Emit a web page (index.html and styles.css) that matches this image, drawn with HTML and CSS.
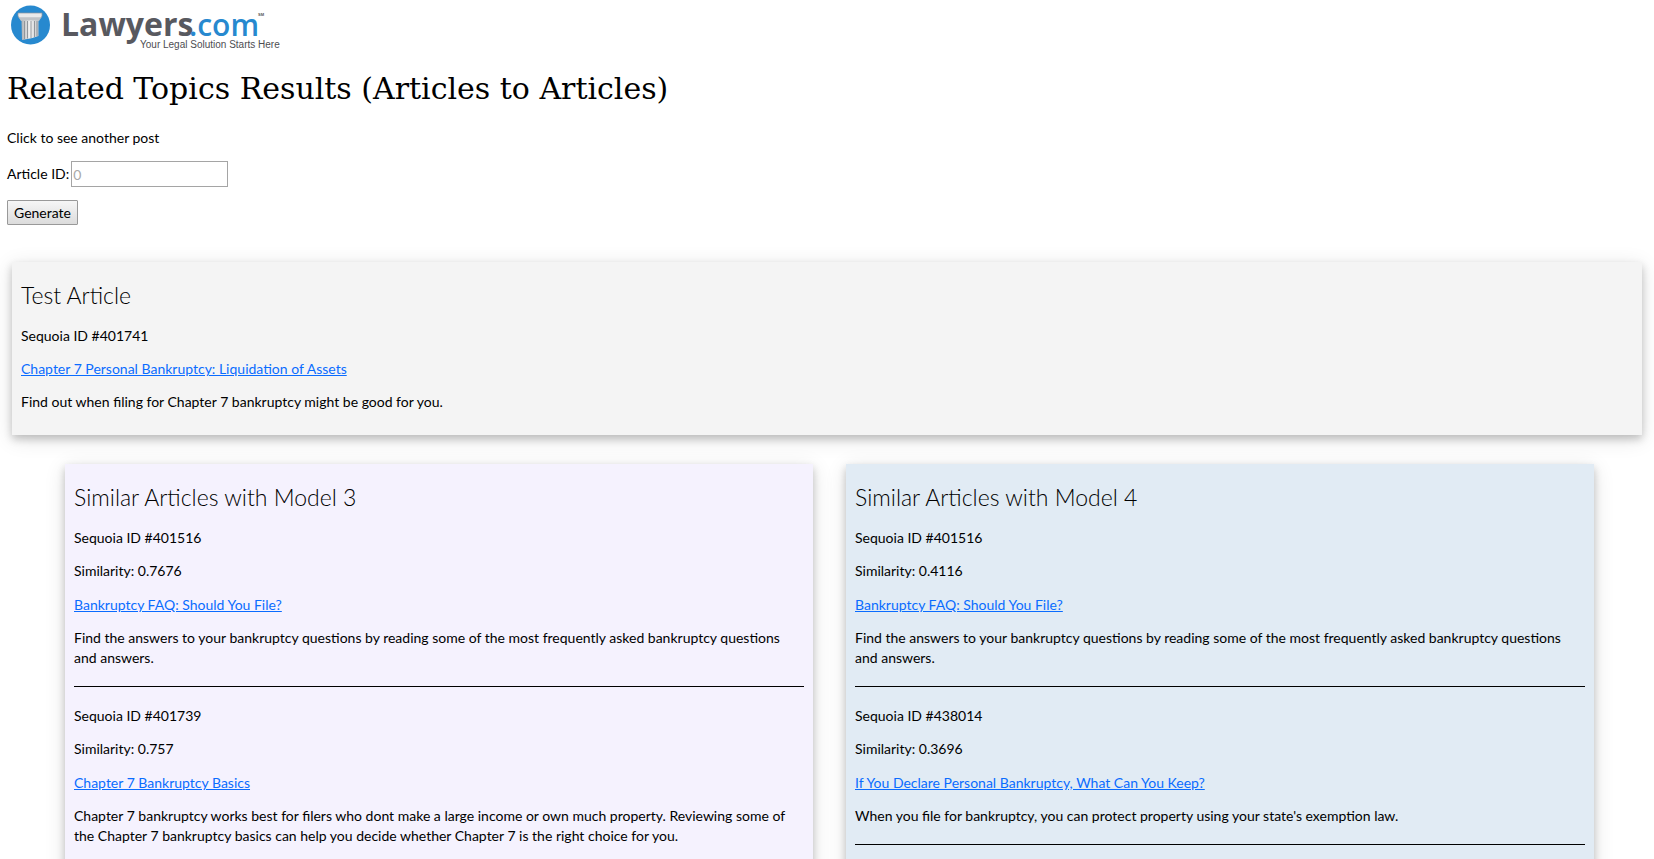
FILE: index.html
```html
<!DOCTYPE html>
<html lang="en">
<head>
<meta charset="utf-8">
<title>Related Topics Results</title>
<link rel="stylesheet" href="styles.css">
</head>
<body>
<header>
<svg class="logo" width="280" height="54" viewBox="0 0 280 54" role="img" aria-label="Lawyers.com, Your Legal Solution Starts Here">
<defs><linearGradient id="stone" x1="0" x2="1" y1="0" y2="0"><stop offset="0" stop-color="#aeb1b5"/><stop offset=".5" stop-color="#f4f4f4"/><stop offset="1" stop-color="#c4c6c9"/></linearGradient></defs>
<circle cx="23.500" cy="25" r="19.500" fill="#2789cf"/>
<path d="M11 13h24v3l-1 2H12l-1-2z" fill="#e9eaeb" stroke="#8f979e" stroke-width=".7"/>
<path d="M12 18h22l-2 3H14z" fill="#bfc3c7"/>
<path d="M14.500 20.500h17V36l-6 2-10.500 2z" fill="url(#stone)"/>
<path d="M17.500 21v18M20.500 21v17.500M24 21v17M27.500 21v16M30 21v15" stroke="#91969c" stroke-width="1" fill="none"/>
<text class="logo-name" x="54" y="36">Lawyers</text>
<text class="logo-com" x="182" y="36">.com</text>
<text class="logo-mark" x="251" y="16">SM</text>
<text class="logo-tag" x="133" y="48">Your Legal Solution Starts Here</text>
</svg>
<h1>Related Topics Results (Articles to Articles)</h1>
</header>
<main>
<form class="lookup">
<p>Click to see another post</p>
<div class="field"><label for="article">Article ID:</label><input id="article" type="text" placeholder="0"></div>
<button type="button">Generate</button>
</form>
<section class="card test">
<h2>Test Article</h2>
<p class="id">Sequoia ID #401741</p>
<p class="link"><a href="#">Chapter 7 Personal Bankruptcy: Liquidation of Assets</a></p>
<p>Find out when filing for Chapter 7 bankruptcy might be good for you.</p>
</section>
<div class="models">
<section class="card model3">
<h2>Similar Articles with Model 3</h2>
<article>
<p class="id">Sequoia ID #401516</p>
<p>Similarity: 0.7676</p>
<p class="link"><a href="#">Bankruptcy FAQ: Should You File?</a></p>
<p>Find the answers to your bankruptcy questions by reading some of the most frequently asked bankruptcy questions and answers.</p>
</article>
<article>
<p class="id">Sequoia ID #401739</p>
<p>Similarity: 0.757</p>
<p class="link"><a href="#">Chapter 7 Bankruptcy Basics</a></p>
<p>Chapter 7 bankruptcy works best for filers who dont make a large income or own much property. Reviewing some of the Chapter 7 bankruptcy basics can help you decide whether Chapter 7 is the right choice for you.</p>
</article>
</section>
<section class="card model4">
<h2>Similar Articles with Model 4</h2>
<article>
<p class="id">Sequoia ID #401516</p>
<p>Similarity: 0.4116</p>
<p class="link"><a href="#">Bankruptcy FAQ: Should You File?</a></p>
<p>Find the answers to your bankruptcy questions by reading some of the most frequently asked bankruptcy questions and answers.</p>
</article>
<article>
<p class="id">Sequoia ID #438014</p>
<p>Similarity: 0.3696</p>
<p class="link"><a href="#">If You Declare Personal Bankruptcy, What Can You Keep?</a></p>
<p>When you file for bankruptcy, you can protect property using your state's exemption law.</p>
</article>
</section>
</div>
</main>
</body>
</html>
```
FILE: styles.css
```css
* { box-sizing: border-box; }
html { overflow: hidden; }
body {
  margin: 0;
  padding: 0 7px;
  font: 400 14px/20px Lato, "Open Sans", sans-serif;
  color: #000;
  background: #fff;
}
.logo { display: block; }
.logo-name { font: 700 32px "Open Sans", sans-serif; fill: #58595f; }
.logo-com { font: 600 30px "Open Sans", sans-serif; fill: #2789cf; }
.logo-mark { font: 700 4px "Liberation Sans", sans-serif; fill: #555; }
.logo-tag { font: 400 10px "Liberation Sans", sans-serif; fill: #4d4d52; }
h1 {
  margin: 15px 0 17px;
  font: 400 30px/40px "DejaVu Serif", serif;
}
h2 { margin: 0 0 16px; font-size: 23px; font-weight: 300; line-height: 30px; }
p { margin: 0 0 14px; }
.id, .link { margin-bottom: 13px; }
a { color: #0a6cff; }
.lookup p { margin-bottom: 11px; line-height: 24px; }
.field { display: flex; align-items: center; gap: 2px; margin-bottom: 13px; }
input {
  width: 157px;
  height: 26px;
  padding: 1px;
  border: 1px solid #a5a5a5;
  font: inherit;
}
input::placeholder { color: #a9a9a9; opacity: 1; }
button {
  display: block;
  height: 25px;
  padding: 0 6px;
  border: 1px solid #999;
  border-radius: 1px;
  background: linear-gradient(#f6f6f6, #dcdcdc);
  font: inherit;
  color: #000;
}
.card {
  padding: 18px 9px 0;
  box-shadow: 0 4px 8px rgba(0, 0, 0, .2), 0 4px 20px rgba(0, 0, 0, .12);
}
.test { margin: 37px 5px 29px; padding-bottom: 9px; background: #f4f4f4; }
.models { display: grid; grid-template-columns: 1fr 1fr; gap: 33px; padding: 0 53px 0 58px; }
.models .card { padding-bottom: 20px; }
.model3 { background: #f5f2fe; }
.model4 { background: #e1ebf4; }
article { padding-bottom: 4px; margin-bottom: 19px; border-bottom: 1px solid #000; }
```
